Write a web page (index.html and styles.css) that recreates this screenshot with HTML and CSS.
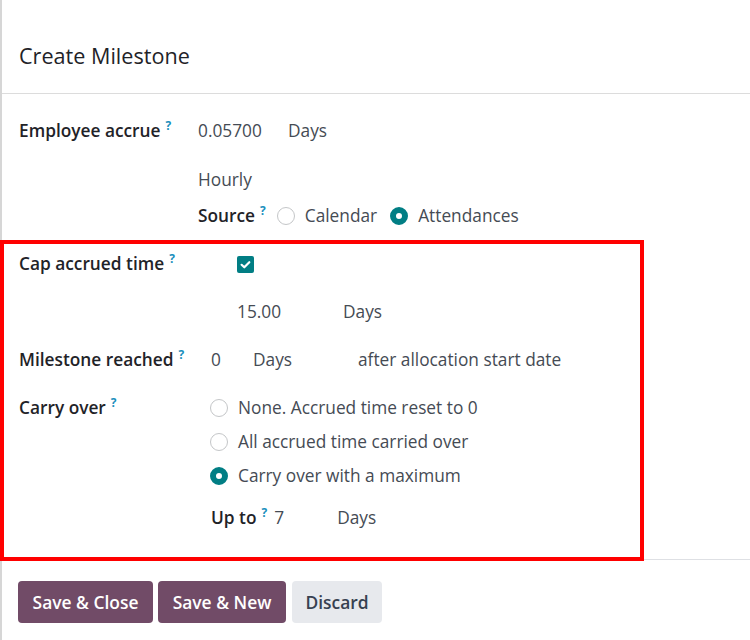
FILE: index.html
```html
<!DOCTYPE html>
<html>
<head>
<meta charset="utf-8">
<link rel="stylesheet" href="styles.css">
</head>
<body>
<div class="dialog">
  <div class="header"><h4 class="title">Create Milestone</h4></div>
  <div class="body">
    <div class="row r-accrue">
      <div class="label w-accrue">Employee accrue<sup class="help">?</sup></div>
      <div class="val f-accrue">0.05700</div>
      <div class="val">Days</div>
    </div>
    <div class="row r-hourly">
      <div class="spacer w-accrue"></div>
      <div class="val">Hourly</div>
    </div>
    <div class="row r-source">
      <div class="spacer w-accrue"></div>
      <div class="label inline f-source">Source<sup class="help">?</sup></div>
      <span class="radio"></span><span class="val opt">Calendar</span>
      <span class="radio on"></span><span class="val">Attendances</span>
    </div>

    <div class="highlight">
      <div class="row r-cap">
        <div class="label w-cap">Cap accrued time<sup class="help">?</sup></div>
        <span class="check"><svg viewBox="0 0 17 17" width="17" height="17"><path d="M4.6 8.8 L7.3 11.3 L12.3 6.2" fill="none" stroke="#fff" stroke-width="2.2" stroke-linecap="round" stroke-linejoin="round"/></svg></span>
      </div>
      <div class="row r-max">
        <div class="spacer w-cap"></div>
        <div class="val f-max">15.00</div>
        <div class="val">Days</div>
      </div>
      <div class="row r-mile">
        <div class="label w-mile">Milestone reached<sup class="help">?</sup></div>
        <div class="val f-zero">0</div>
        <div class="val f-days">Days</div>
        <div class="val">after allocation start date</div>
      </div>
      <div class="row r-carry">
        <div class="label w-carry">Carry over<sup class="help">?</sup></div>
        <div class="options">
          <div class="opt-row"><span class="radio"></span><span class="val">None. Accrued time reset to 0</span></div>
          <div class="opt-row"><span class="radio"></span><span class="val">All accrued time carried over</span></div>
          <div class="opt-row"><span class="radio on"></span><span class="val">Carry over with a maximum</span></div>
        </div>
      </div>
      <div class="row r-upto">
        <div class="spacer w-mile"></div>
        <div class="label inline f-upto">Up to<sup class="help">?</sup></div>
        <div class="val f-seven">7</div>
        <div class="val">Days</div>
      </div>
    </div>
  </div>
  <div class="footer">
    <button class="btn primary b-close">Save &amp; Close</button>
    <button class="btn primary b-new">Save &amp; New</button>
    <button class="btn secondary b-discard">Discard</button>
  </div>
</div>
</body>
</html>
```
FILE: styles.css
```css
* { box-sizing: border-box; }
html, body { margin: 0; padding: 0; background: #fff; }
body {
  font-family: "Open Sans", "Noto Sans", sans-serif;
  font-size: 17.3px;
  color: #1f2328;
}
.dialog {
  width: 750px;
  height: 640px;
  border-left: 2px solid #d6d6d6;
}
.header {
  height: 94px;
  padding: 42px 0 0 17px;
  border-bottom: 1px solid #dcdcdc;
}
.title {
  margin: 0;
  font-size: 21.6px;
  line-height: 28px;
  font-weight: 400;
  color: #1f2328;
}
.body { padding: 25px 0 0 0; }
.row {
  display: flex;
  align-items: center;
  height: 24px;
  line-height: 24px;
  padding-left: 17px;
}
.label {
  font-weight: 600;
  color: #1f2328;
  white-space: nowrap;
}
.label.inline { margin-right: 6px; }
.f-source.inline { margin-right: 11px; }
.help {
  color: #1b8fbd;
  font-size: 12px;
  font-weight: 700;
  margin-left: 5px;
  vertical-align: 7px;
  line-height: 0;
}
.val { color: #454b54; white-space: nowrap; }
.w-accrue { width: 179px; flex: none; }
.w-cap { width: 218px; flex: none; }
.w-mile { width: 192px; flex: none; }
.w-carry { width: 191px; flex: none; align-self: flex-start; }
.f-accrue { width: 90px; }
.f-max { width: 106px; }
.f-zero { width: 42px; }
.f-days { width: 105px; }
.f-seven { width: 63px; }
.f-upto.inline { margin-right: 7px; }
.r-hourly { margin-top: 25px; }
.r-source { margin-top: 12px; }
.radio {
  flex: none;
  width: 18px;
  height: 18px;
  border-radius: 50%;
  border: 1px solid #c4c6c8;
  background: #fff;
  margin-right: 10px;
}
.radio.on {
  border: 6px solid #017e84;
  background: #fff;
}
.opt { margin-right: 13px; }
.check {
  flex: none;
  width: 17px;
  height: 17px;
  background: #017e84;
  border-radius: 2px;
  display: flex;
}
.highlight {
  position: relative;
  margin: 12px 0 -2px -2px;
  width: 644px;
  border: 4px solid #ff0000;
  padding: 8px 0 27px 0;
}
.highlight .row { padding-left: 15px; }
.r-max, .r-mile, .r-carry { margin-top: 24px; }
.r-carry { height: auto; align-items: flex-start; }
.options { display: flex; flex-direction: column; gap: 10px; }
.opt-row { display: flex; align-items: center; height: 24px; }
.r-upto { margin-top: 18px; }
.footer {
  border-top: 1px solid #dee0e4;
  padding: 21px 0 0 16px;
  display: flex;
}
.btn {
  font-family: inherit;
  font-size: 17.4px;
  font-weight: 600;
  height: 42px;
  border: none;
  border-radius: 4px;
  padding: 0;
  cursor: pointer;
}
.primary { background: #714b67; color: #fff; }
.secondary { background: #e7e9ed; color: #374151; }
.b-close { width: 135px; }
.b-new { width: 128px; margin-left: 5px; }
.b-discard { width: 90px; margin-left: 6px; }
```
